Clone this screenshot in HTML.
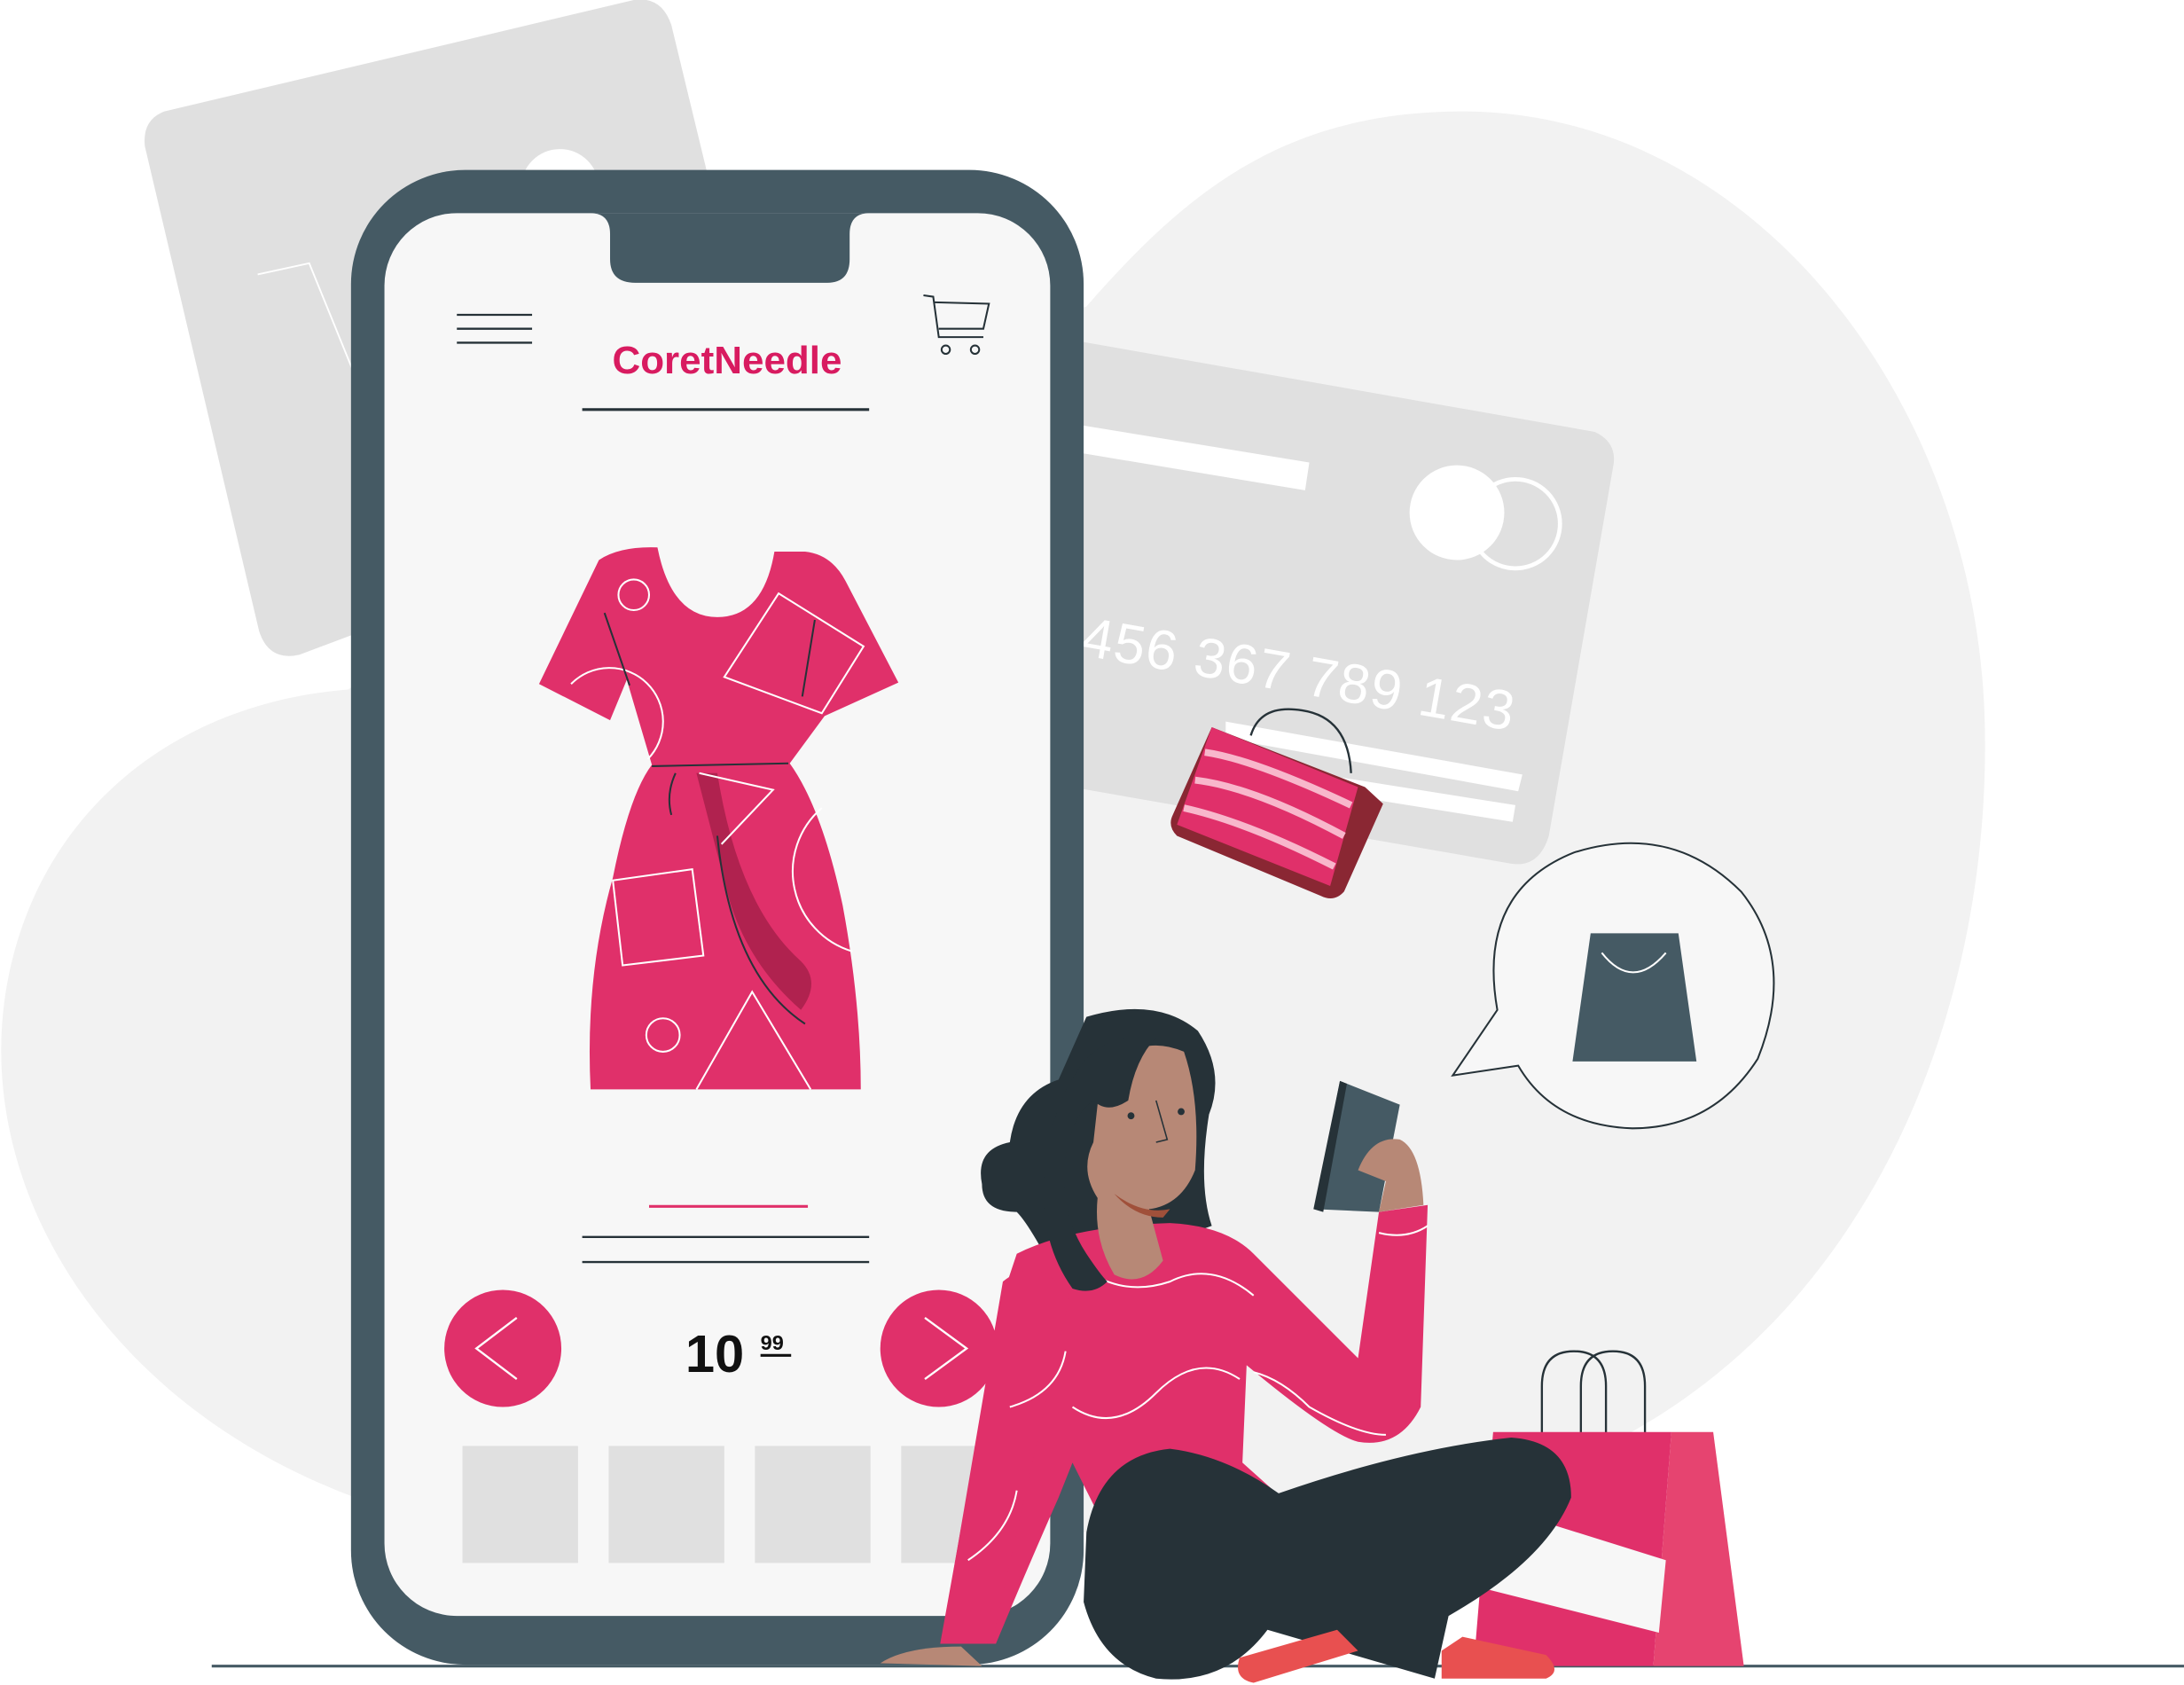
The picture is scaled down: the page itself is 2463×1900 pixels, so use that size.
<!DOCTYPE html>
<html><head><meta charset="utf-8"><style>
html,body{margin:0;padding:0;background:#fff;}
svg{display:block;}
</style></head><body>
<svg width="2463" height="1900" viewBox="0 0 1568 1209.6" xmlns="http://www.w3.org/2000/svg">
<path d="M250 495 C120 505 20 590 3 720 C-15 860 80 1010 255 1075 L780 1100 L1100 1060 C1330 980 1430 740 1425 520 C1420 290 1260 80 1050 80 C920 80 850 140 780 220 L520 300 Z" fill="#f2f2f2"/>
<path d="M118 80 L455 0 Q475 -3 482 18 L560 340 L215 470 Q193 475 186 453 L104 105 Q102 86 118 80 Z" fill="#e0e0e0"/>
<path d="M185 197 L222 189 L255 270" fill="none" stroke="#fff" stroke-width="1.2"/>
<circle cx="402" cy="135" r="28" fill="#fff"/>
<path d="M775 245 L1145 310 Q1162 318 1158 336 L1112 600 Q1105 623 1085 620 L775 566 Z" fill="#e0e0e0"/>
<path d="M775 305 L940 332 L937 352 L775 325 Z" fill="#fff"/>
<circle cx="1088" cy="376" r="32" fill="none" stroke="#fff" stroke-width="3"/>
<circle cx="1046" cy="368" r="34" fill="#fff"/>
<text x="775" y="470" fill="#fff" font-family="Liberation Sans, sans-serif" font-size="40" transform="rotate(10 775 470)" letter-spacing="1">456 367 789 123</text>
<path d="M880 518 L1093 556 L1090 568 L880 530 Z M880 545 L1088 578 L1086 590 L880 557 Z" fill="#fff"/>
<rect x="252" y="122" width="526" height="1073" rx="82" fill="#455a64"/>
<rect x="276" y="153" width="478" height="1007" rx="52" fill="#f7f7f7"/>
<path d="M424 153 Q438 153 438 168 L438 186 Q438 203 456 203 L594 203 Q610 203 610 186 L610 168 Q610 153 624 153 Z" fill="#455a64"/>
<g stroke="#263238" stroke-width="1.5"><line x1="328" y1="226" x2="382" y2="226"/><line x1="328" y1="236" x2="382" y2="236"/><line x1="328" y1="246" x2="382" y2="246"/></g>
<g fill="none" stroke="#263238" stroke-width="1.3"><path d="M663 212 L670 213 L674 242 L706 242"/><path d="M671 217 L710 218 L706 236 L674 236"/><circle cx="679" cy="251" r="3"/><circle cx="700" cy="251" r="3"/></g>
<text x="522" y="268" text-anchor="middle" fill="#d81b60" font-family="Liberation Sans, sans-serif" font-weight="bold" font-size="28">CoretNeedle</text>
<line x1="418" y1="294" x2="624" y2="294" stroke="#263238" stroke-width="2"/>
<path d="M430 402 Q445 392 472 393 Q482 443 515 443 Q548 443 556 396 L578 396 Q597 398 607 417 L645 490 L592 514 L567 548 Q590 580 605 650 Q618 720 618 782 L424 782 Q420 700 440 630 Q452 570 468 549 L450 488 L438 517 L387 491 Z" fill="#e0306a"/>
<path d="M500 555 L522 640 Q535 690 575 725 Q590 705 575 690 Q530 650 515 555 Z" fill="#b0224f"/>
<g fill="none" stroke="#fff" stroke-width="1.3">
<circle cx="455" cy="427" r="11"/><path d="M559 426 L620 464 L590 512 L520 486 Z"/>
<path d="M410 491 A38 38 0 1 1 465 545"/><path d="M502 555 L555 567 L518 606"/>
<path d="M440 632 L497 624 L505 686 L447 693 Z"/><path d="M612 683 A60 60 0 0 1 590 580"/>
<circle cx="476" cy="743" r="12"/><path d="M500 782 L540 712 L582 782"/></g>
<g fill="none" stroke="#263238" stroke-width="1.3"><path d="M468 550 L566 548"/><path d="M434 440 L452 492"/><path d="M585 445 L576 500"/><path d="M485 555 Q478 570 482 585"/><path d="M515 600 Q525 700 578 735"/></g>
<line x1="466" y1="866" x2="580" y2="866" stroke="#e0306a" stroke-width="2"/>
<line x1="418" y1="888" x2="624" y2="888" stroke="#263238" stroke-width="1.5"/>
<line x1="418" y1="906" x2="624" y2="906" stroke="#263238" stroke-width="1.5"/>
<circle cx="361" cy="968" r="42" fill="#e0306a"/>
<path d="M371 946 L342 968 L371 990" fill="none" stroke="#fff" stroke-width="1.5"/>
<circle cx="674" cy="968" r="42" fill="#e0306a"/>
<path d="M664 946 L694 968 L664 990" fill="none" stroke="#fff" stroke-width="1.5"/>
<text x="492" y="985" fill="#111" font-family="Liberation Sans, sans-serif" font-weight="bold" font-size="38">10</text>
<text x="546" y="969" fill="#111" font-family="Liberation Sans, sans-serif" font-weight="bold" font-size="15">99</text>
<line x1="546" y1="973" x2="568" y2="973" stroke="#111" stroke-width="2"/>
<g fill="#e0e0e0"><rect x="332" y="1038" width="83" height="84"/><rect x="437" y="1038" width="83" height="84"/><rect x="542" y="1038" width="83" height="84"/><rect x="647" y="1038" width="60" height="84"/></g>
<line x1="152" y1="1196" x2="1568" y2="1196" stroke="#455a64" stroke-width="2"/>
<path d="M898 528 Q905 505 935 510 Q968 515 970 555" fill="none" stroke="#263238" stroke-width="1.5"/>
<path d="M870 522 L980 565 L993 577 L965 640 Q958 648 948 643 L845 600 Q838 593 842 585 Z" fill="#8a2733"/>
<path d="M870 522 L975 565 L955 636 L845 592 Z" fill="#e0306a"/>
<g stroke="#f8b7cb" stroke-width="5" fill="none"><path d="M865 540 Q900 545 970 578"/><path d="M858 560 Q900 565 965 600"/><path d="M850 580 Q895 590 958 622"/></g>
<path d="M1075 725 Q1060 640 1130 612 Q1200 590 1250 640 Q1290 690 1262 760 Q1230 810 1172 810 Q1115 808 1090 765 L1043 772 Z" fill="#f7f7f7" stroke="#263238" stroke-width="1.3"/>
<path d="M1142 670 L1205 670 L1218 762 L1129 762 Z" fill="#455a64"/>
<path d="M1150 684 Q1172 712 1196 684" fill="none" stroke="#fff" stroke-width="1.3"/>
<g fill="none" stroke="#263238" stroke-width="1.5"><path d="M1107 1030 L1107 995 Q1107 970 1130 970 Q1153 970 1153 995 L1153 1030"/><path d="M1135 1030 L1135 995 Q1135 970 1158 970 Q1181 970 1181 995 L1181 1030"/></g>
<path d="M1072 1028 L1200 1028 L1187 1196 L1058 1196 Z" fill="#e0306a"/>
<path d="M1200 1028 L1230 1028 L1252 1196 L1187 1196 Z" fill="#e64470"/>
<path d="M1068 1080 L1196 1120 L1191 1172 L1064 1140 Z" fill="#f7f7f7"/>
<path d="M780 730 Q830 715 860 740 Q880 770 868 800 Q860 850 870 880 L760 920 Q740 880 730 870 Q705 870 705 850 Q700 825 725 820 Q730 785 760 775 Z" fill="#263238"/>
<path d="M730 900 Q770 880 840 878 Q880 880 900 900 L975 975 L990 870 L1025 865 L1020 1010 Q1005 1040 975 1035 Q955 1030 895 980 L892 1050 L920 1075 L800 1110 L770 1050 L760 1075 Q740 1120 715 1180 L675 1180 L720 930 Z" fill="#e0306a"/>
<path d="M720 920 Q745 900 768 930 L712 1180 L676 1178 Z" fill="#e0306a"/>
<g fill="none" stroke="#fff" stroke-width="1.3"><path d="M770 1010 Q800 1030 830 1000 Q860 970 890 990"/><path d="M785 915 Q810 930 840 920 Q870 905 900 930"/><path d="M900 985 Q920 990 940 1010 Q975 1030 995 1030"/><path d="M990 885 Q1010 890 1025 880"/><path d="M725 1010 Q760 1000 765 970"/><path d="M695 1120 Q725 1100 730 1070"/></g>
<path d="M790 775 Q815 740 850 755 Q862 790 858 840 Q848 865 825 868 L835 905 Q820 925 800 915 Q785 890 788 860 Q775 840 785 820 Z" fill="#b78876"/>
<path d="M800 857 Q820 872 840 868 L835 874 Q815 874 800 857Z" fill="#a0503a"/>
<circle cx="812" cy="801" r="2.5" fill="#263238"/><circle cx="848" cy="798" r="2.5" fill="#263238"/>
<path d="M830 790 L838 818 L830 820" fill="none" stroke="#263238" stroke-width="1"/>
<path d="M780 760 Q800 740 830 745 Q815 760 810 790 Q795 800 785 790 Q770 800 765 830 Q760 870 780 900 Q790 915 795 920 Q785 930 770 925 Q745 890 750 840 Q755 790 780 760Z" fill="#263238"/>
<path d="M962 776 L1005 793 L990 870 L944 868 Z" fill="#455a64"/>
<path d="M962 776 L967 778 L950 870 L943 868 Z" fill="#263238"/>
<path d="M975 840 Q985 815 1005 818 Q1020 825 1022 865 L990 870 L995 848 Z" fill="#b78876"/>
<path d="M780 1100 Q790 1045 840 1040 Q880 1045 918 1072 Q1010 1040 1085 1032 Q1128 1035 1128 1075 Q1110 1120 1040 1160 L1030 1205 L910 1170 Q880 1210 830 1205 Q790 1195 778 1150 Z" fill="#263238"/>
<path d="M890 1190 L960 1170 L975 1185 L900 1208 Q885 1205 890 1190Z" fill="#e85050"/>
<path d="M1035 1185 L1050 1175 L1110 1188 Q1122 1200 1110 1205 L1035 1205Z" fill="#e85050"/>
<path d="M632 1194 Q650 1182 690 1182 L705 1196 Z" fill="#b78876"/>
</svg>
</body></html>
